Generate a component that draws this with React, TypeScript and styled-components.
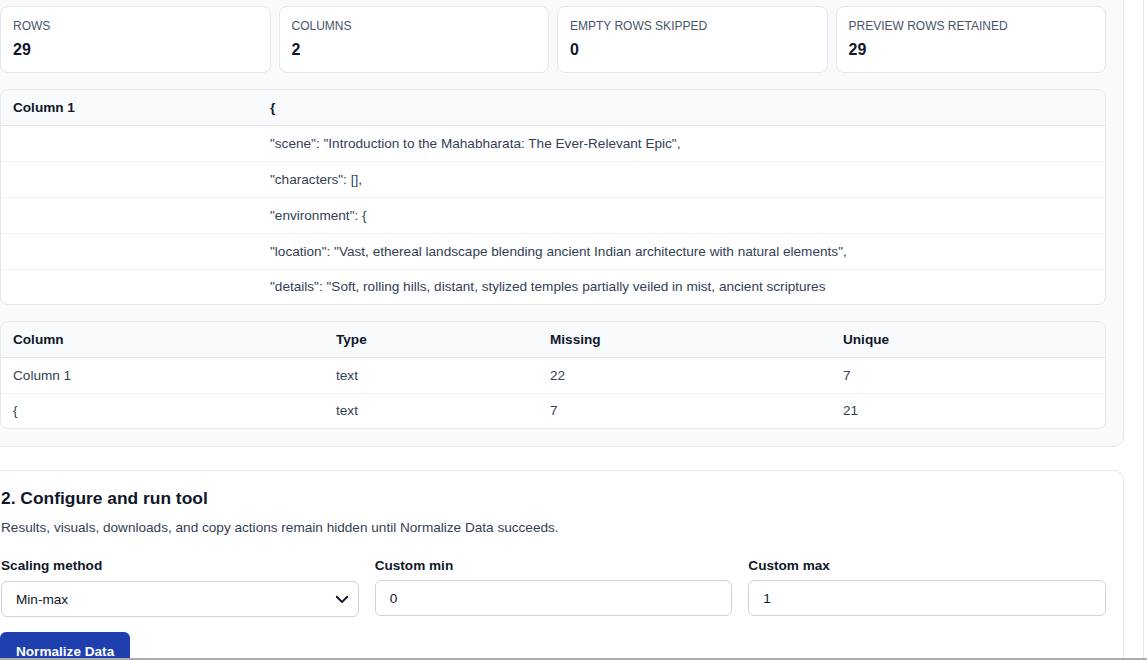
import styled, { createGlobalStyle } from 'styled-components';

const GlobalStyle = createGlobalStyle`
  html, body {
    margin: 0;
    padding: 0;
    background: #ffffff;
    overflow: hidden;
  }
  body {
    font-family: "Liberation Sans", Arial, sans-serif;
    color: #0f172a;
  }
  * {
    box-sizing: border-box;
  }
`;

const Viewport = styled.div`
  height: 660px;
  overflow: hidden;
  border-bottom: 2px solid #ababab;
`;

const Main = styled.main`
  width: 1162px;
  margin-left: -18px;
  padding-right: 19px;
  border-right: 1px solid #e2e8f0;
  min-height: 660px;
  display: flex;
  flex-direction: column;
  gap: 23px;
`;

const Panel = styled.section<{ $muted?: boolean }>`
  margin-top: ${(p) => (p.$muted ? '-12px' : '0')};
  background: ${(p) => (p.$muted ? '#f8fafc' : '#ffffff')};
  border: 1px solid #e2e8f0;
  border-radius: 10px;
  padding: ${(p) => (p.$muted ? '17px 17px 17px 17px' : '16px 17px 20px 18px')};
  display: flex;
  flex-direction: column;
  gap: 16px;
`;

const StatGrid = styled.div`
  display: grid;
  grid-template-columns: repeat(4, 1fr);
  gap: 8px;
`;

const StatCard = styled.div`
  background: #ffffff;
  border: 1px solid #e2e8f0;
  border-radius: 8px;
  padding: 11px 12px 12px;
  display: flex;
  flex-direction: column;
  gap: 6px;
`;

const StatLabel = styled.div`
  font-size: 12px;
  line-height: 16px;
  text-transform: uppercase;
  color: #475569;
`;

const StatValue = styled.div`
  font-size: 16px;
  line-height: 20px;
  font-weight: 700;
  color: #0f172a;
`;

const TableFrame = styled.div`
  background: #ffffff;
  border: 1px solid #e2e8f0;
  border-radius: 8px;
  overflow: hidden;
`;

const Table = styled.table`
  width: 100%;
  border-collapse: collapse;
  table-layout: fixed;
  font-size: 13.6px;
`;

const HeadCell = styled.th`
  height: 35px;
  padding: 0 12px;
  text-align: left;
  font-size: 13.6px;
  font-weight: 700;
  color: #0f172a;
  background: #f8fafc;
  border-bottom: 1px solid #e2e8f0;
`;

const Cell = styled.td`
  height: 36px;
  padding: 0 12px;
  color: #334155;
  white-space: nowrap;
  overflow: hidden;
  border-top: 1px solid #eef2f6;
`;

const BodyRow = styled.tr`
  &:first-child td {
    border-top: none;
  }
  &:last-child td {
    height: 35px;
  }
`;

const Title = styled.h2`
  margin: 0;
  font-size: 17.4px;
  line-height: 22px;
  font-weight: 700;
  color: #0f172a;
`;

const Description = styled.p`
  margin: -7px 0 4px;
  font-size: 13.6px;
  line-height: 20px;
  color: #334155;
`;

const FieldGrid = styled.div`
  display: grid;
  grid-template-columns: repeat(3, 1fr);
  gap: 16px;
`;

const Field = styled.label`
  display: flex;
  flex-direction: column;
  gap: 6px;
`;

const FieldLabel = styled.span`
  font-size: 13.6px;
  line-height: 16px;
  font-weight: 700;
  color: #0f172a;
`;

const Control = styled.div<{ $top?: number }>`
  height: 36px;
  margin-top: ${(p) => p.$top ?? 0}px;
  border: 1px solid #cbd5e1;
  border-radius: 6px;
  background: #ffffff;
  padding: 0 14px;
  display: flex;
  align-items: center;
  justify-content: space-between;
  font-size: 13.6px;
  color: #0f172a;
`;

const Chevron = styled.svg`
  width: 18px;
  height: 18px;
  margin-right: -7px;
`;

const RunButton = styled.button`
  align-self: flex-start;
  margin: -1px 0 0 -1px;
  height: 36px;
  padding: 2px 16px 0;
  border: none;
  border-radius: 6px;
  background: #1e40af;
  color: #ffffff;
  font-family: inherit;
  font-size: 13.6px;
  font-weight: 700;
`;

const stats = [
  { label: 'Rows', value: '29' },
  { label: 'Columns', value: '2' },
  { label: 'Empty rows skipped', value: '0' },
  { label: 'Preview rows retained', value: '29' },
];

const previewRows = [
  '"scene": "Introduction to the Mahabharata: The Ever-Relevant Epic",',
  '"characters": [],',
  '"environment": {',
  '"location": "Vast, ethereal landscape blending ancient Indian architecture with natural elements",',
  '"details": "Soft, rolling hills, distant, stylized temples partially veiled in mist, ancient scriptures',
];

const profile = [
  { column: 'Column 1', type: 'text', missing: '22', unique: '7' },
  { column: '{', type: 'text', missing: '7', unique: '21' },
];

export default function App() {
  return (
    <>
      <GlobalStyle />
      <Viewport>
        <Main>
          <Panel $muted>
            <StatGrid>
              {stats.map((s) => (
                <StatCard key={s.label}>
                  <StatLabel>{s.label}</StatLabel>
                  <StatValue>{s.value}</StatValue>
                </StatCard>
              ))}
            </StatGrid>

            <TableFrame>
              <Table>
                <colgroup>
                  <col style={{ width: 257 }} />
                  <col />
                </colgroup>
                <thead>
                  <tr>
                    <HeadCell>Column 1</HeadCell>
                    <HeadCell>{'{'}</HeadCell>
                  </tr>
                </thead>
                <tbody>
                  {previewRows.map((r) => (
                    <BodyRow key={r}>
                      <Cell />
                      <Cell>{r}</Cell>
                    </BodyRow>
                  ))}
                </tbody>
              </Table>
            </TableFrame>

            <TableFrame>
              <Table>
                <colgroup>
                  <col style={{ width: 323 }} />
                  <col style={{ width: 214 }} />
                  <col style={{ width: 293 }} />
                  <col />
                </colgroup>
                <thead>
                  <tr>
                    <HeadCell>Column</HeadCell>
                    <HeadCell>Type</HeadCell>
                    <HeadCell>Missing</HeadCell>
                    <HeadCell>Unique</HeadCell>
                  </tr>
                </thead>
                <tbody>
                  {profile.map((p) => (
                    <BodyRow key={p.column}>
                      <Cell>{p.column}</Cell>
                      <Cell>{p.type}</Cell>
                      <Cell>{p.missing}</Cell>
                      <Cell>{p.unique}</Cell>
                    </BodyRow>
                  ))}
                </tbody>
              </Table>
            </TableFrame>
          </Panel>

          <Panel>
            <Title>2. Configure and run tool</Title>
            <Description>
              Results, visuals, downloads, and copy actions remain hidden until Normalize Data succeeds.
            </Description>
            <FieldGrid>
              <Field>
                <FieldLabel>Scaling method</FieldLabel>
                <Control $top={1}>
                  <span>Min-max</span>
                  <Chevron viewBox="0 0 24 24" fill="none" stroke="#0f172a" strokeWidth="2.4" strokeLinecap="round" strokeLinejoin="round">
                    <path d="M5 9l7 7 7-7" />
                  </Chevron>
                </Control>
              </Field>
              <Field>
                <FieldLabel>Custom min</FieldLabel>
                <Control>0</Control>
              </Field>
              <Field>
                <FieldLabel>Custom max</FieldLabel>
                <Control>1</Control>
              </Field>
            </FieldGrid>
            <RunButton>Normalize Data</RunButton>
          </Panel>
        </Main>
      </Viewport>
    </>
  );
}
